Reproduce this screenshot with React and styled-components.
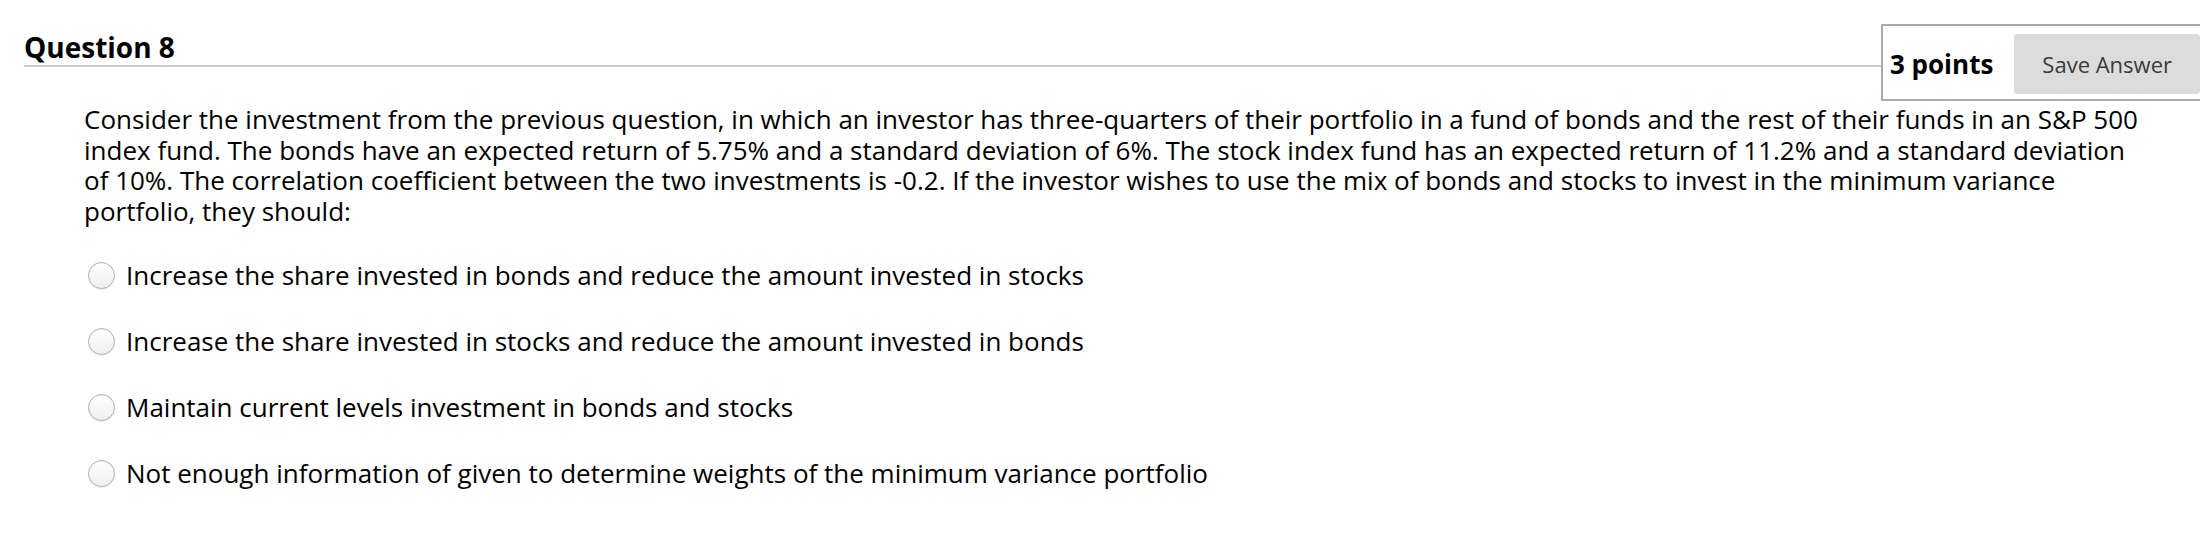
import React from 'react';
import styled, { createGlobalStyle } from 'styled-components';

const GlobalStyle = createGlobalStyle`
  html, body {
    margin: 0;
    padding: 0;
    background: #fff;
    overflow: hidden;
  }

  body {
    font-family: "Open Sans", "Noto Sans", sans-serif;
    color: #111;
  }
`;

const QuestionBlock = styled.div`
  width: 2200px;
  box-sizing: border-box;
`;

const Header = styled.div`
  display: flex;
  align-items: flex-start;
  padding-left: 24px;
`;

const Title = styled.h2`
  flex: 1;
  margin: 30px 0 0;
  padding-bottom: 1px;
  font-size: 28px;
  line-height: 34px;
  font-weight: 700;
  color: #000;
  border-bottom: 2px solid #cdcdcd;
`;

const PointsBox = styled.div`
  display: flex;
  align-items: center;
  flex-shrink: 0;
  gap: 21px;
  margin-top: 24px;
  margin-right: -10px;
  padding: 8px 8px 5px 7px;
  background: #fff;
  border: 2px solid #ababab;
`;

const Points = styled.span`
  font-size: 26px;
  font-weight: 700;
  color: #000;
  white-space: nowrap;
`;

const SaveButton = styled.button`
  height: 60px;
  padding: 0 28px;
  border: 0;
  border-radius: 4px;
  background: #dcdcdc;
  color: #3a3a3a;
  font-family: inherit;
  font-size: 22px;
  white-space: nowrap;
`;

const Body = styled.div`
  padding-left: 84px;
`;

const Prompt = styled.p`
  width: 2065px;
  margin: 3px 0 0;
  font-size: 26px;
  line-height: 30.5px;
  color: #000;
`;

const Options = styled.ul`
  list-style: none;
  margin: 34px 0 0;
  padding: 0 0 0 4px;
`;

const Option = styled.li`
  display: flex;
  align-items: center;
  gap: 11px;
  margin-bottom: 36px;
  font-size: 26px;
  line-height: 30px;
  color: #000;
`;

const Radio = styled.span`
  width: 27px;
  height: 27px;
  flex-shrink: 0;
  box-sizing: border-box;
  border-radius: 50%;
  border: 1px solid #afafaf;
  background: linear-gradient(#ffffff, #efefef);
  box-shadow: inset 0 1px 1px rgba(0, 0, 0, 0.04), 0 1px 1px rgba(0, 0, 0, 0.08);
`;

const answers = [
  'Increase the share invested in bonds and reduce the amount invested in stocks',
  'Increase the share invested in stocks and reduce the amount invested in bonds',
  'Maintain current levels investment in bonds and stocks',
  'Not enough information of given to determine weights of the minimum variance portfolio',
];

export default function App() {
  return (
    <>
      <GlobalStyle />
      <QuestionBlock>
        <Header>
          <Title>Question 8</Title>
          <PointsBox>
            <Points>3 points</Points>
            <SaveButton>Save Answer</SaveButton>
          </PointsBox>
        </Header>
        <Body>
          <Prompt>
            Consider the investment from the previous question, in which an investor has three-quarters of their
            portfolio in a fund of bonds and the rest of their funds in an S&amp;P 500 index fund. The bonds have an
            expected return of 5.75% and a standard deviation of 6%. The stock index fund has an expected return of
            11.2% and a standard deviation of 10%. The correlation coefficient between the two investments is -0.2. If
            the investor wishes to use the mix of bonds and stocks to invest in the minimum variance portfolio, they
            should:
          </Prompt>
          <Options>
            {answers.map((a) => (
              <Option key={a}>
                <Radio />
                <span>{a}</span>
              </Option>
            ))}
          </Options>
        </Body>
      </QuestionBlock>
    </>
  );
}
